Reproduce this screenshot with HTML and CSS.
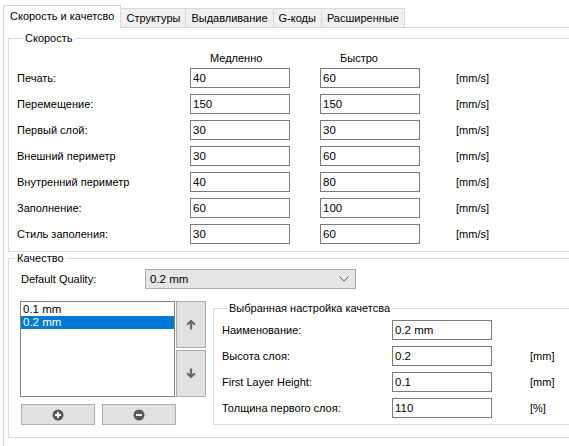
FILE: index.html
```html
<!DOCTYPE html>
<html lang="ru">
<head>
<meta charset="utf-8">
<title>Скорость и качество</title>
<link rel="stylesheet" href="styles.css">
</head>
<body>
<div class="window">
  <div class="tabs">
    <div class="tab active">Скорость и качетсво</div>
    <div class="tab">Структуры</div>
    <div class="tab">Выдавливание</div>
    <div class="tab">G-коды</div>
    <div class="tab">Расширенные</div>
  </div>
  <div class="panel">
    <fieldset class="group speed">
      <legend>Скорость</legend>
      <div class="colheads">
        <span></span><span class="colhead">Медленно</span><span class="colhead">Быстро</span>
      </div>
      <div class="speed-grid">
        <label>Печать:</label><input class="field" value="40"><input class="field" value="60"><span class="unit">[mm/s]</span>
        <label>Перемещение:</label><input class="field" value="150"><input class="field" value="150"><span class="unit">[mm/s]</span>
        <label>Первый слой:</label><input class="field" value="30"><input class="field" value="30"><span class="unit">[mm/s]</span>
        <label>Внешний периметр</label><input class="field" value="30"><input class="field" value="60"><span class="unit">[mm/s]</span>
        <label>Внутренний периметр</label><input class="field" value="40"><input class="field" value="80"><span class="unit">[mm/s]</span>
        <label>Заполнение:</label><input class="field" value="60"><input class="field" value="100"><span class="unit">[mm/s]</span>
        <label>Стиль заполения:</label><input class="field" value="30"><input class="field" value="60"><span class="unit">[mm/s]</span>
      </div>
    </fieldset>
    <fieldset class="group quality">
      <legend>Качество</legend>
      <div class="quality-top">
        <label class="dq-label">Default Quality:</label>
        <div class="combo">
          <span>0.2 mm</span>
          <svg class="chev" width="10" height="6" viewBox="0 0 10 6"><polyline points="0.5,0.5 5,5 9.5,0.5" fill="none" stroke="#707070" stroke-width="1"/></svg>
        </div>
      </div>
      <div class="quality-bottom">
        <div class="list-col">
          <div class="listbox">
            <div class="item">0.1 mm</div>
            <div class="item selected">0.2 mm</div>
          </div>
          <div class="pm-row">
            <button class="btn pm">
              <svg width="12" height="12" viewBox="0 0 12 12"><circle cx="6" cy="6" r="5.5" fill="#585858"/><path d="M6 3v6M3 6h6" stroke="#fff" stroke-width="1.8"/></svg>
            </button>
            <button class="btn pm">
              <svg width="12" height="12" viewBox="0 0 12 12"><circle cx="6" cy="6" r="5.5" fill="#585858"/><path d="M3 6h6" stroke="#fff" stroke-width="1.8"/></svg>
            </button>
          </div>
        </div>
        <div class="arrow-col">
          <button class="btn arrow">
            <svg width="10" height="11" viewBox="0 0 10 11"><path d="M5 10.5V2M1.2 5.8L5 2l3.8 3.8" fill="none" stroke="#6a6a6a" stroke-width="2.2"/></svg>
          </button>
          <button class="btn arrow">
            <svg width="10" height="11" viewBox="0 0 10 11"><path d="M5 0.5V9M1.2 5.2L5 9l3.8-3.8" fill="none" stroke="#6a6a6a" stroke-width="2.2"/></svg>
          </button>
        </div>
        <fieldset class="group selected-q">
          <legend>Выбранная настройка качетсва</legend>
          <div class="sel-grid">
            <label>Наименование:</label><input class="field" value="0.2 mm"><span class="unit"></span>
            <label>Высота слоя:</label><input class="field" value="0.2"><span class="unit">[mm]</span>
            <label>First Layer Height:</label><input class="field" value="0.1"><span class="unit">[mm]</span>
            <label>Толщина первого слоя:</label><input class="field" value="110"><span class="unit">[%]</span>
          </div>
        </fieldset>
      </div>
    </fieldset>
  </div>
</div>
</body>
</html>
```

FILE: styles.css
```css
html, body {
  margin: 0;
  padding: 0;
  overflow: hidden;
  background: #ffffff;
}
body {
  width: 569px;
  height: 446px;
  font-family: "Liberation Sans", Arial, sans-serif;
  font-size: 11px;
  color: #000;
}
.window {
  width: 569px;
  height: 446px;
  overflow: hidden;
}
.tabs {
  display: flex;
  align-items: flex-end;
  height: 27px;
  padding-left: 3px;
}
.tab {
  position: relative;
  box-sizing: border-box;
  height: 19px;
  line-height: 18px;
  padding: 0 5px;
  font-size: 11px;
  background: #f0f0f0;
  border: 1px solid #d9d9d9;
  border-bottom: none;
  margin-left: -1px;
  white-space: nowrap;
}
.tab:first-child {
  margin-left: 0;
}
.tab.active {
  height: 23px;
  line-height: 21px;
  padding: 0 6px;
  background: #fff;
  margin-bottom: -1px;
  z-index: 2;
}
.panel {
  width: 600px;
  margin-left: 3px;
  border-top: 1px solid #d9d9d9;
  border-left: 1px solid #d9d9d9;
  padding: 4px 0 0 4px;
  height: 430px;
}
.group {
  margin: 0;
  padding: 0;
  min-width: 0;
  border: 1px solid #dcdcdc;
}
.group legend {
  line-height: 13px;
  padding: 0 2px;
  margin-left: 6px;
  font-size: 11px;
}
.speed {
  width: 590px;
  box-sizing: border-box;
  padding: 6px 0 7px 8px;
}
.colheads {
  display: grid;
  grid-template-columns: 173px 130px 136px;
  height: 14px;
  line-height: 14px;
  margin-bottom: 3px;
}
.colhead {
  padding-left: 20px;
}
.speed-grid {
  display: grid;
  grid-template-columns: 173px 130px 136px auto;
  grid-auto-rows: 20px;
  row-gap: 6px;
  align-items: center;
}
.field {
  box-sizing: border-box;
  width: 100px;
  height: 20px;
  margin: 0;
  padding: 0 2px;
  border: 1px solid #7a7a7a;
  border-radius: 0;
  background: #fff;
  font-family: "Liberation Sans", Arial, sans-serif;
  font-size: 11.5px;
  color: #000;
  outline: none;
}
.unit {
  white-space: nowrap;
}
.quality {
  width: 590px;
  box-sizing: border-box;
  padding: 4px 0 12px 0;
}
.quality-top {
  display: flex;
  align-items: center;
  height: 20px;
  padding-left: 12px;
}
.dq-label {
  width: 124px;
}
.combo {
  box-sizing: border-box;
  width: 211px;
  height: 20px;
  display: flex;
  align-items: center;
  justify-content: space-between;
  padding: 0 5px 0 4px;
  background: #e5e5e5;
  border: 1px solid #acacac;
  font-size: 11.5px;
}
.chev {
  margin-right: 1px;
}
.quality-bottom {
  display: flex;
  align-items: flex-start;
  margin-top: 12px;
  padding-left: 11px;
}
.list-col {
  display: flex;
  flex-direction: column;
}
.listbox {
  box-sizing: border-box;
  width: 155px;
  height: 96px;
  border: 1px solid #828282;
  padding-top: 1px;
  background: #fff;
  font-size: 11.5px;
}
.item {
  height: 13px;
  line-height: 13px;
  padding-left: 2px;
}
.item.selected {
  background: #0078d7;
  color: #fff;
}
.pm-row {
  display: flex;
  gap: 7px;
  margin-top: 7px;
  margin-left: 1px;
}
.btn {
  box-sizing: border-box;
  margin: 0;
  padding: 0;
  border: 1px solid #adadad;
  background: #e1e1e1;
  display: flex;
  align-items: center;
  justify-content: center;
}
.pm {
  width: 74px;
  height: 21px;
}
.arrow-col {
  display: flex;
  flex-direction: column;
  gap: 2px;
}
.arrow {
  width: 30px;
  height: 47px;
}
.selected-q {
  width: 380px;
  box-sizing: border-box;
  margin-left: 7px;
  margin-top: 1px;
  padding: 5px 0 6px 8px;
}
.selected-q legend {
  margin-left: 5px;
}
.sel-grid {
  display: grid;
  grid-template-columns: 170px 138px auto;
  grid-auto-rows: 20px;
  row-gap: 6px;
  align-items: center;
}
```
